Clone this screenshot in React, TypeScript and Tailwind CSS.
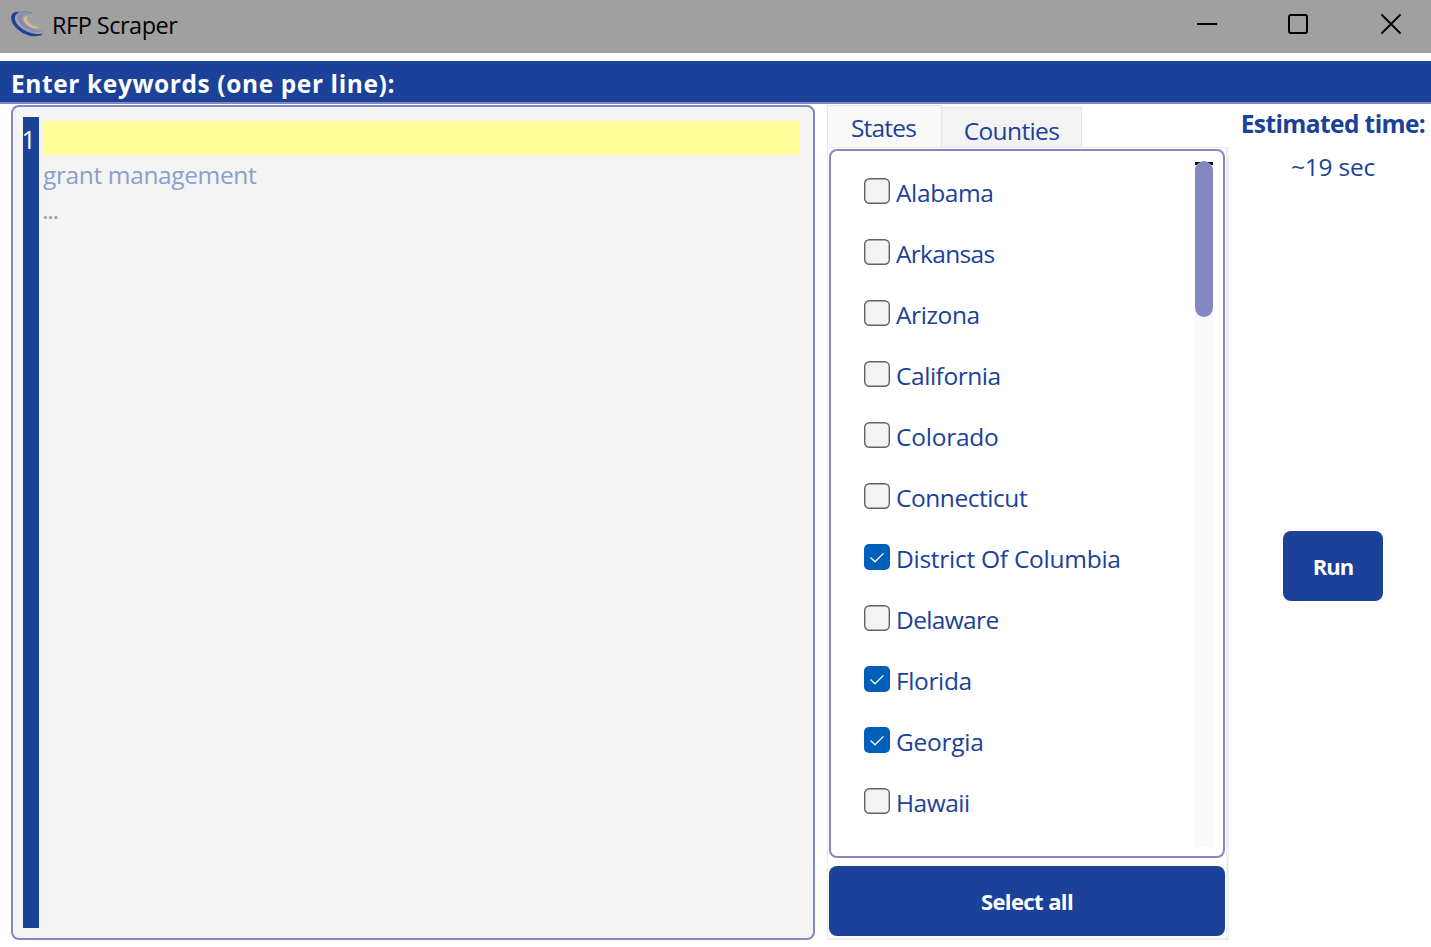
import { useState } from "react";

const initialStates: { name: string; checked: boolean; label: string }[] = [
  { name: "Alabama", checked: false, label: "tracking-[-0.37px]" },
  { name: "Arkansas", checked: false, label: "tracking-[-0.7px]" },
  { name: "Arizona", checked: false, label: "tracking-[-0.4px]" },
  { name: "California", checked: false, label: "tracking-[-0.45px]" },
  { name: "Colorado", checked: false, label: "tracking-[-0.23px]" },
  { name: "Connecticut", checked: false, label: "tracking-[-0.45px]" },
  { name: "District Of Columbia", checked: true, label: "tracking-[-0.26px]" },
  { name: "Delaware", checked: false, label: "tracking-[-0.65px]" },
  { name: "Florida", checked: true, label: "tracking-[-0.37px]" },
  { name: "Georgia", checked: true, label: "tracking-[-0.25px]" },
  { name: "Hawaii", checked: false, label: "tracking-[-0.5px]" },
];

function AppLogo() {
  return (
    <svg className="h-[26px] w-[34px]" viewBox="0 0 34 26" fill="none">
      <path d="M10 1.200C4.500-.2.400 2.800 1.300 8.500 3 17 14.500 25.200 25 25.300c4-.1 6.700-1.100 7.700-2.800-3 1-7.700.6-12.200-.7C12.500 19.200 5.700 13.500 4.900 8.200 4.400 4.500 6.500 2.200 10 1.200Z" fill="#1e429a" />
      <path d="M7 2.300C11 .3 17 .3 22 2.400" stroke="#6f7cae" strokeWidth="1" />
      <path d="M19 3C14.500 1.700 9.300 2 8 5 6.500 9.500 12 16 19 19.300c5 2.200 11.500 2.500 13.500.7-4 .2-8-.8-12-3.200C14.500 13.300 11 9 12 6c1-2.200 3.400-2.900 7-3Z" fill="#8489bd" />
      <path d="M18.500 5.200c-4-.2-5.500 1.800-4.300 4.700 1.400 3.600 6.800 7 11.300 7.300 1.500 0 2.500-.4 3-1-3.500-.2-6.800-1.800-9.200-4-2.800-2.600-3.800-5.400-.8-7Z" fill="#d9bd85" />
    </svg>
  );
}

function TitleBar() {
  return (
    <header className="flex h-[53px] shrink-0 items-start bg-[#a0a0a0] pl-2.5 text-black">
      <div className="pt-[11px]"><AppLogo /></div>
      <h1 className="ml-2 mt-[7px] whitespace-nowrap text-[23.5px] leading-9 tracking-[-0.5px]">RFP Scraper</h1>
      <div className="ml-auto flex pt-[13px] pr-[29px]">
        <button className="mr-[69px]" aria-label="Minimize">
          <svg className="h-[22px] w-[22px]" viewBox="0 0 22 22"><path d="M1 11h20" stroke="black" strokeWidth="2" /></svg>
        </button>
        <button className="mr-[71px]" aria-label="Maximize">
          <svg className="h-[22px] w-[22px]" viewBox="0 0 22 22" fill="none"><rect x="2" y="2" width="18" height="18" rx="2" stroke="black" strokeWidth="2" /></svg>
        </button>
        <button aria-label="Close">
          <svg className="h-[22px] w-[22px]" viewBox="0 0 22 22"><path d="m1.500 1.500 19 19m0-19-19 19" stroke="black" strokeWidth="1.800" /></svg>
        </button>
      </div>
    </header>
  );
}

function KeywordEditor() {
  return (
    <section className="ml-[11px] mt-px flex h-[835px] w-[804px] shrink-0 rounded-lg border-2 border-[#8488c1] bg-[#f4f4f4] p-2.5">
      <div className="w-4 shrink-0 bg-[#1b4199] pt-1 text-[25px] leading-9 text-white">
        <span className="-ml-[1.5px] block">1</span>
      </div>
      <div className="ml-1 w-[757px] pt-1 text-[24.5px] leading-9 text-[#8b9fcb]">
        <div className="h-[34px] bg-[#ffff99]" />
        <p className="mt-0.5 tracking-[-0.37px]">grant management</p>
        <p className="-ml-px -mt-px tracking-[-1.2px]">...</p>
      </div>
    </section>
  );
}

function CheckBox({ checked }: { checked: boolean }) {
  return checked ? (
    <span className="flex size-[26px] items-center justify-center rounded-[5px] bg-[#005fb8]">
      <svg className="size-[26px]" viewBox="0 0 26 26" fill="none"><path d="m6.500 13.600 4.500 4.200 8.500-8.400" stroke="white" strokeWidth="1.300" /></svg>
    </span>
  ) : (
    <svg className="size-[26px]" viewBox="0 0 26 26">
      <rect x=".7" y=".7" width="24.600" height="24.600" rx="4.800" fill="#f3f3f3" stroke="#626262" strokeWidth="1.400" />
    </svg>
  );
}

function StatePanel() {
  const [states, setStates] = useState(initialStates);
  const toggle = (name: string) =>
    setStates(states.map((s) => (s.name === name ? { ...s, checked: !s.checked } : s)));
  return (
    <section className="ml-3 mt-px flex h-[835px] w-[402px] shrink-0 flex-col">
      <div className="flex h-[42px] items-start text-[24.5px] text-[#1b4199]">
        <button className="h-[42px] w-[115px] border border-b-0 border-[#e5e5e5] bg-[#f9f9f9] leading-9">
          <span className="mr-0.5 block pt-0.5 tracking-[-0.8px]">States</span>
        </button>
        <button className="mt-0.5 h-10 w-[140px] border border-b-0 border-l-0 border-[#e5e5e5] bg-[#f3f3f3] leading-9">
          <span className="block pt-[5px] tracking-[-0.62px]">Counties</span>
        </button>
      </div>
      <div className="flex h-[793px] flex-col border border-r-[3px] border-b-2 border-[#ececec] border-r-[#f0f0f0] px-px pt-px">
        <div className="flex h-[709px] w-[396px] shrink-0 justify-between rounded-lg border-2 border-[#8488c1] pl-[33px] pr-2.5 pt-2.5">
          <div className="pt-[3px]">
            {states.map((s) => (
              <button key={s.name} onClick={() => toggle(s.name)} className="flex h-[61px] items-start whitespace-nowrap pt-3.5">
                <CheckBox checked={s.checked} />
                <span className={"pl-1.5 text-[24.5px] leading-[30px] text-[#1b4199] " + s.label}>{s.name}</span>
              </button>
            ))}
          </div>
          <div className="h-[686px] w-[18px] bg-[#f9f9f9]">
            <div className="h-[156px] bg-[linear-gradient(white_0_1px,black_1px_4px,transparent_4px)]">
              <div className="h-full rounded-[9px] bg-[#8488c1]" />
            </div>
          </div>
        </div>
        <button className="mt-2 h-[70px] w-[396px] shrink-0 rounded-lg bg-[#1b4199] text-[22px] font-bold text-white">
          <span className="block tracking-[-0.6px]">Select all</span>
        </button>
      </div>
    </section>
  );
}

function RunPanel() {
  return (
    <aside className="flex w-[202px] shrink-0 flex-col items-center whitespace-nowrap pl-1.5 text-[#1b4199]">
      <h2 className="mt-0.5 text-[24.5px] font-bold leading-9 tracking-[-0.6px]">Estimated time:</h2>
      <p className="mt-[7px] text-[24.5px] leading-9 tracking-[-0.25px]">~19 sec</p>
      <button className="mt-[346px] h-[70px] w-[100px] rounded-lg bg-[#1b4199] text-[22px] font-bold text-white">
        <span className="block tracking-[-0.9px]">Run</span>
      </button>
    </aside>
  );
}

export default function App() {
  return (
    <div className="flex h-[947px] w-[1431px] flex-col overflow-hidden bg-white font-['Open_Sans','Noto_Sans',sans-serif]">
      <TitleBar />
      <div className="mt-2 h-[43px] shrink-0 border-b-2 border-[#8488c1] bg-[#1b4199] pl-[11px] text-[24.5px] font-bold leading-[45px] tracking-[0.6px] text-white">
        Enter keywords (one per line):
      </div>
      <main className="flex">
        <KeywordEditor />
        <StatePanel />
        <RunPanel />
      </main>
    </div>
  );
}
